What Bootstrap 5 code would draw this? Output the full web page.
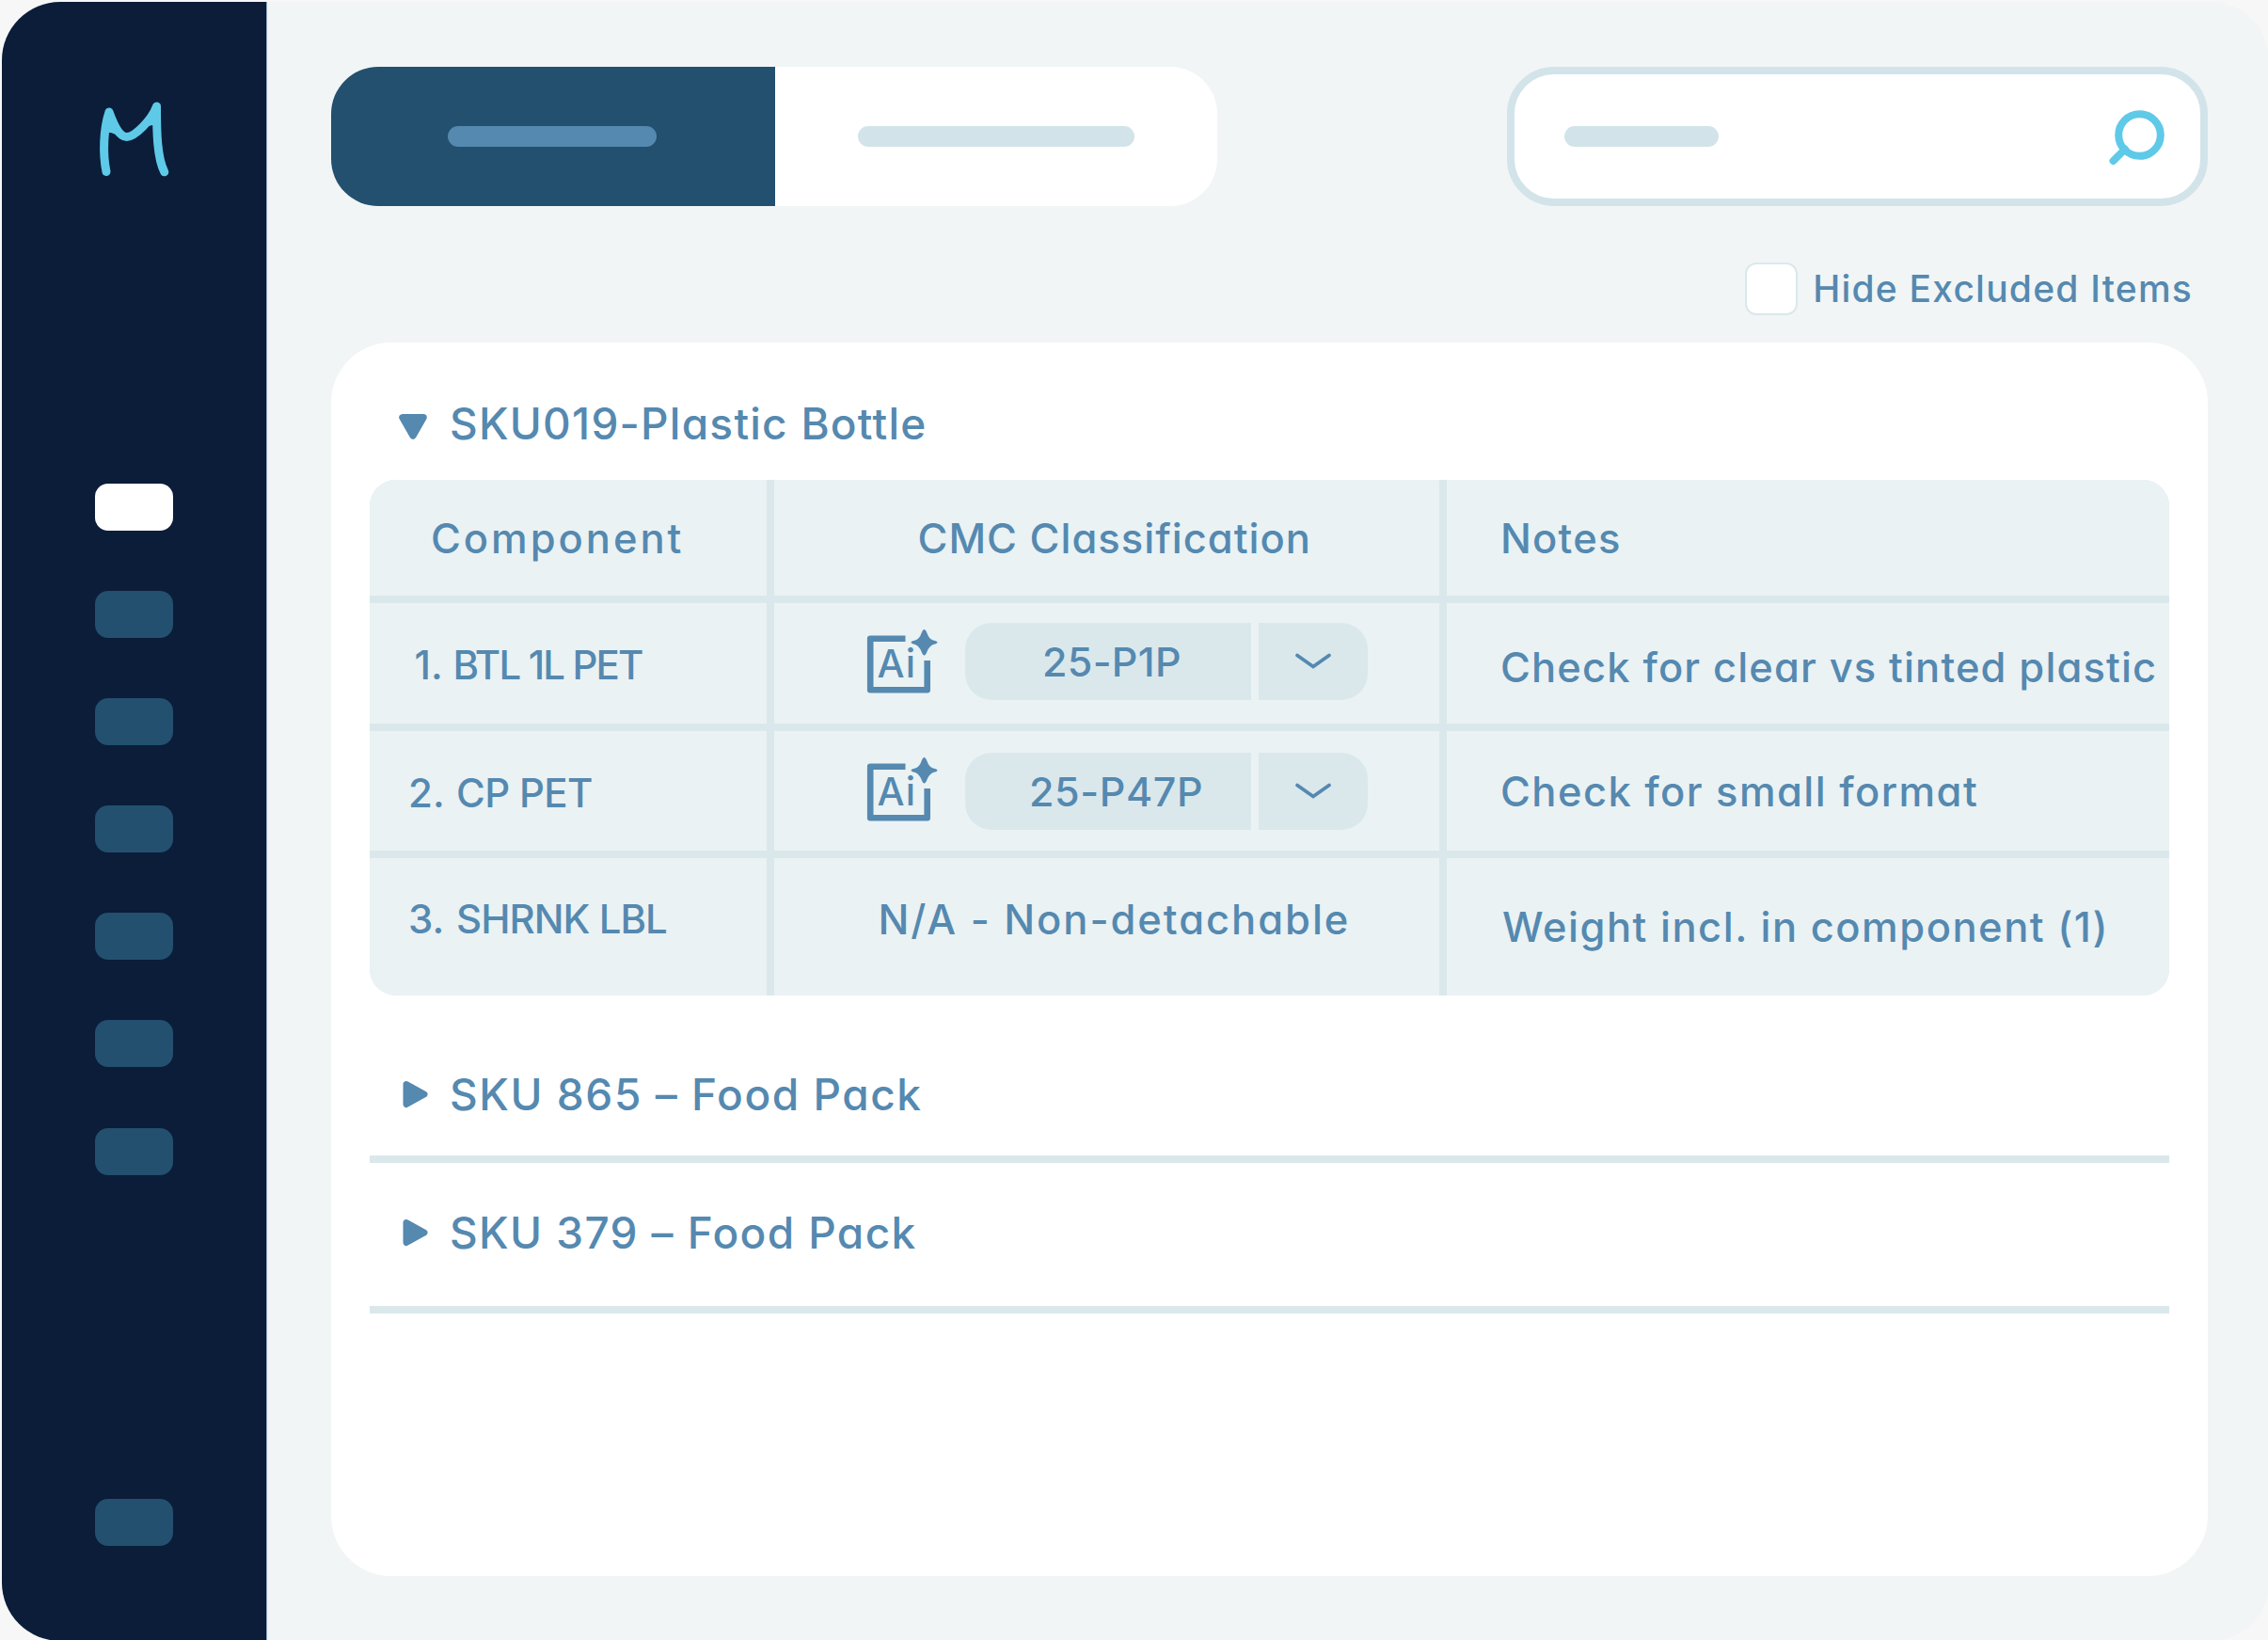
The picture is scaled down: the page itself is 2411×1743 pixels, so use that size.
<!DOCTYPE html>
<html lang="en">
<head>
<meta charset="utf-8">
<meta name="viewport" content="width=device-width, initial-scale=1">
<title>SKU components</title>
<link href="https://cdn.jsdelivr.net/npm/bootstrap@5.3.0/dist/css/bootstrap.min.css" rel="stylesheet">
<style>
:root{--navy:#0b1d39;--teal:#23506e;--blue:#5589b0;--pale:#d2e4ea;--line:#dae8ec;--cell:#eaf2f4;--sky:#5fc9e8}
body{background:#f7f7f7;color:var(--blue);font-family:Inter,"Liberation Sans",sans-serif;font-weight:500;font-size:42px;line-height:50px;font-feature-settings:"cv11";overflow:hidden;white-space:nowrap}
svg{display:block;flex:none}
.app-window{width:2410px;height:1742px;margin:2px 0 0 2px;background:#f1f5f6;border-radius:62px;overflow:hidden}
.side-rail{width:282px;background:var(--navy);border-right:1px solid #8aa9c0;padding:105px 0 101px 99px}
.rail-list{gap:64.2px;margin-top:322.5px}
.rail-item{width:83px;height:50px;border-radius:14px;background:var(--teal)}
.rail-item.active{background:#fff}
.workspace{padding:69px 65.5px 69px 68px}
.tabs-switch{width:942px;height:148px;border-radius:50px;background:#fff;overflow:hidden}
.tab-on{width:472px;background:var(--teal);padding-right:2px}
.stub{height:22.5px;border-radius:12px;background:var(--pale)}
.stub-a{width:222px;background:var(--blue)}
.stub-b{width:293.5px}
.stub-c{width:164px}
.search-box{width:745px;height:148px;border:8px solid var(--pale);border-radius:50px;background:#fff;padding:0 37px 0 53px}
.hide-row{height:56px;margin:60px 15.5px 0 0;gap:16px;font-size:39px;letter-spacing:1.22px}
.form-check-input.tick{width:56px;height:56px;margin:0;border:2px solid var(--line);border-radius:12px;background-color:#fff}
.sheet{margin-top:29px;border-radius:64px;background:#fff;padding:61px 40.5px 0 41px}
.group-head{height:50px;font-size:46px;letter-spacing:1.55px}
.group-head svg{margin-right:21px}
.group-title-1{letter-spacing:1.24px}
.group-title-3{letter-spacing:1.38px}
.grid-table{display:grid;grid-template-columns:422px 707px 1fr;grid-template-rows:123px 128px 127px 146px;gap:8px;margin-top:35px;height:548px;border-radius:28px;background:var(--line);overflow:hidden}
.grid-table>div{background:var(--cell);display:flex;align-items:center}
.c-name{padding-left:41px}
.c-note{padding-left:57px}
.c-pick{padding-left:98px}
.c-pick-first{padding-bottom:5px}
.c-note,.ls-comp,.ls-cmc,.ls-na{font-size:43.5px}
.num{width:51px}
.num-1{width:47.5px;padding-left:6.5px}
.pick{height:82px;gap:8px;font-size:43px;margin-left:29px}
.pick-code{width:304px;background:var(--line);border-radius:28px 0 0 28px}
.pick-arrow{width:116px;background:var(--line);border-radius:0 28px 28px 0;padding-left:38px}
.code-1{padding-left:82px;letter-spacing:.3px}
.code-2{padding-left:68px;letter-spacing:.6px}
.rule{height:8px;background:var(--line)}
.head-2{margin-top:80px}
.head-3{margin-top:48.5px}
.rule-2{margin-top:40px}
.rule-3{margin-top:53px}
.ls-comp{letter-spacing:2.96px;padding-left:65px}
.ls-cmc{letter-spacing:1px;padding-left:152.5px}
.ls-notes{letter-spacing:1.2px}
.ls-btl{letter-spacing:-1.85px}
.ls-cp{letter-spacing:-.64px}
.ls-shr{letter-spacing:-.97px}
.ls-na{letter-spacing:1.95px;padding-left:110.5px}
.ls-clear{letter-spacing:1.13px}
.ls-small{letter-spacing:1.44px}
.ls-wt{letter-spacing:1.5px;padding-left:2px}
</style>
<script src="https://cdn.jsdelivr.net/npm/bootstrap@5.3.0/dist/js/bootstrap.bundle.min.js"></script>
</head>
<body>
<svg width="0" height="0" class="position-absolute">
  <symbol id="ai" viewBox="0 0 76 70">
    <path d="M41.500 10.800H4.200V65.200H64.700V34" fill="none" stroke="#5589b0" stroke-width="6.600" stroke-linejoin="round"/>
    <path d="M61.500 1Q63 1 64.500 5Q66.500 11 71 12.500Q75.500 13.500 75.500 14.800Q75.500 16 71 17Q66.500 19 64.500 24.500Q63 28.500 61.500 28.500Q60 28.500 58.500 24.500Q56.500 19 52 17Q47.500 16 47.500 14.800Q47.500 13.500 52 12.500Q56.500 11 58.500 5Q60 1 61.500 1Z" fill="#5589b0"/>
  </symbol>
  <symbol id="chev" viewBox="0 0 40 20"><path d="M3 3.500L20 15.500L37 3.500" fill="none" stroke="#5589b0" stroke-width="3.800" stroke-linecap="round"/></symbol>
  <symbol id="right" viewBox="0 0 32 32"><path d="M7 5.500L26 16L7 26.500Z" fill="#5589b0" stroke="#5589b0" stroke-width="7" stroke-linejoin="round"/></symbol>
</svg>
<div class="app-window d-flex">
  <nav class="side-rail d-flex flex-column flex-shrink-0">
    <svg width="90" height="84" viewBox="101 107 90 84"><path d="M113 182.500C109 163 110 137 116 119C120 130 126 145.500 134.800 145.500C143 145.500 161 128 166.500 113C166.500 140 167 168 174.800 182.800" fill="none" stroke="#5fc9e8" stroke-width="9" stroke-linecap="round" stroke-linejoin="round"/><path d="M116.300 119L113 141L118 141L128 145ZM166.500 113L154 135L162 133L168 137Z" fill="#5fc9e8"/></svg>
    <div class="rail-list d-flex flex-column">
      <div class="rail-item active"></div><div class="rail-item"></div><div class="rail-item"></div><div class="rail-item"></div><div class="rail-item"></div><div class="rail-item"></div><div class="rail-item"></div>
    </div>
    <div class="rail-item mt-auto"></div>
  </nav>
  <main class="workspace flex-grow-1 d-flex flex-column">
    <div class="d-flex justify-content-between">
      <div class="tabs-switch d-flex">
        <div class="tab-on d-flex align-items-center justify-content-center"><div class="stub stub-a"></div></div>
        <div class="flex-grow-1 d-flex align-items-center justify-content-center"><div class="stub stub-b"></div></div>
      </div>
      <div class="search-box d-flex align-items-center justify-content-between">
        <div class="stub stub-c"></div>
        <svg width="62" height="62" viewBox="2240 115 62 62" fill="none" stroke="#5fc9e8" stroke-width="8"><circle cx="2274.500" cy="144.500" r="22.300"/><path d="M2259 159.500L2246.500 172" stroke-linecap="round"/></svg>
      </div>
    </div>
    <label class="hide-row d-flex align-items-center justify-content-end"><input type="checkbox" class="form-check-input tick">Hide Excluded Items</label>
    <section class="sheet flex-grow-1">
      <div class="group-head d-flex align-items-center ms-4 ps-1">
        <svg width="36" height="36" viewBox="0 0 36 36"><path d="M7 11.750H29L18 31Z" fill="#5589b0" stroke="#5589b0" stroke-width="7.500" stroke-linejoin="round"/></svg>
        <span class="group-title-1">SKU019-Plastic Bottle</span>
      </div>
      <div class="grid-table">
        <div><span class="ls-comp">Component</span></div>
        <div><span class="ls-cmc">CMC Classification</span></div>
        <div class="c-note"><span class="ls-notes">Notes</span></div>

        <div class="c-name pt-1"><span class="num-1">1.</span><span class="ls-btl">BTL 1L PET</span></div>
        <div class="c-pick c-pick-first">
          <svg width="76" height="70"><use href="#ai"/><text x="11.500" y="52" font-size="41" letter-spacing="1" fill="#5589b0">Ai</text></svg>
          <div class="pick d-flex"><div class="pick-code d-flex align-items-center"><span class="code-1">25-P1P</span></div><div class="pick-arrow d-flex align-items-center"><svg width="40" height="20"><use href="#chev"/></svg></div></div>
        </div>
        <div class="c-note pt-2"><span class="ls-clear">Check for clear vs tinted plastic</span></div>

        <div class="c-name pt-1"><span class="num">2.</span><span class="ls-cp">CP PET</span></div>
        <div class="c-pick">
          <svg class="mb-1" width="76" height="70"><use href="#ai"/><text x="11.500" y="52" font-size="41" letter-spacing="1" fill="#5589b0">Ai</text></svg>
          <div class="pick d-flex"><div class="pick-code d-flex align-items-center"><span class="code-2">25-P47P</span></div><div class="pick-arrow d-flex align-items-center"><svg width="40" height="20"><use href="#chev"/></svg></div></div>
        </div>
        <div class="c-note"><span class="ls-small">Check for small format</span></div>

        <div class="c-name pb-3"><span class="num">3.</span><span class="ls-shr">SHRNK LBL</span></div>
        <div class="pb-3"><span class="ls-na">N/A - Non-detachable</span></div>
        <div class="c-note"><span class="ls-wt">Weight incl. in component (1)</span></div>
      </div>
      <div class="group-head head-2 d-flex align-items-center ms-4 ps-2">
        <svg width="32" height="32"><use href="#right"/></svg><span>SKU 865 – Food Pack</span>
      </div>
      <div class="rule rule-2"></div>
      <div class="group-head head-3 d-flex align-items-center ms-4 ps-2">
        <svg width="32" height="32"><use href="#right"/></svg><span class="group-title-3">SKU 379 – Food Pack</span>
      </div>
      <div class="rule rule-3"></div>
    </section>
  </main>
</div>
</body>
</html>
